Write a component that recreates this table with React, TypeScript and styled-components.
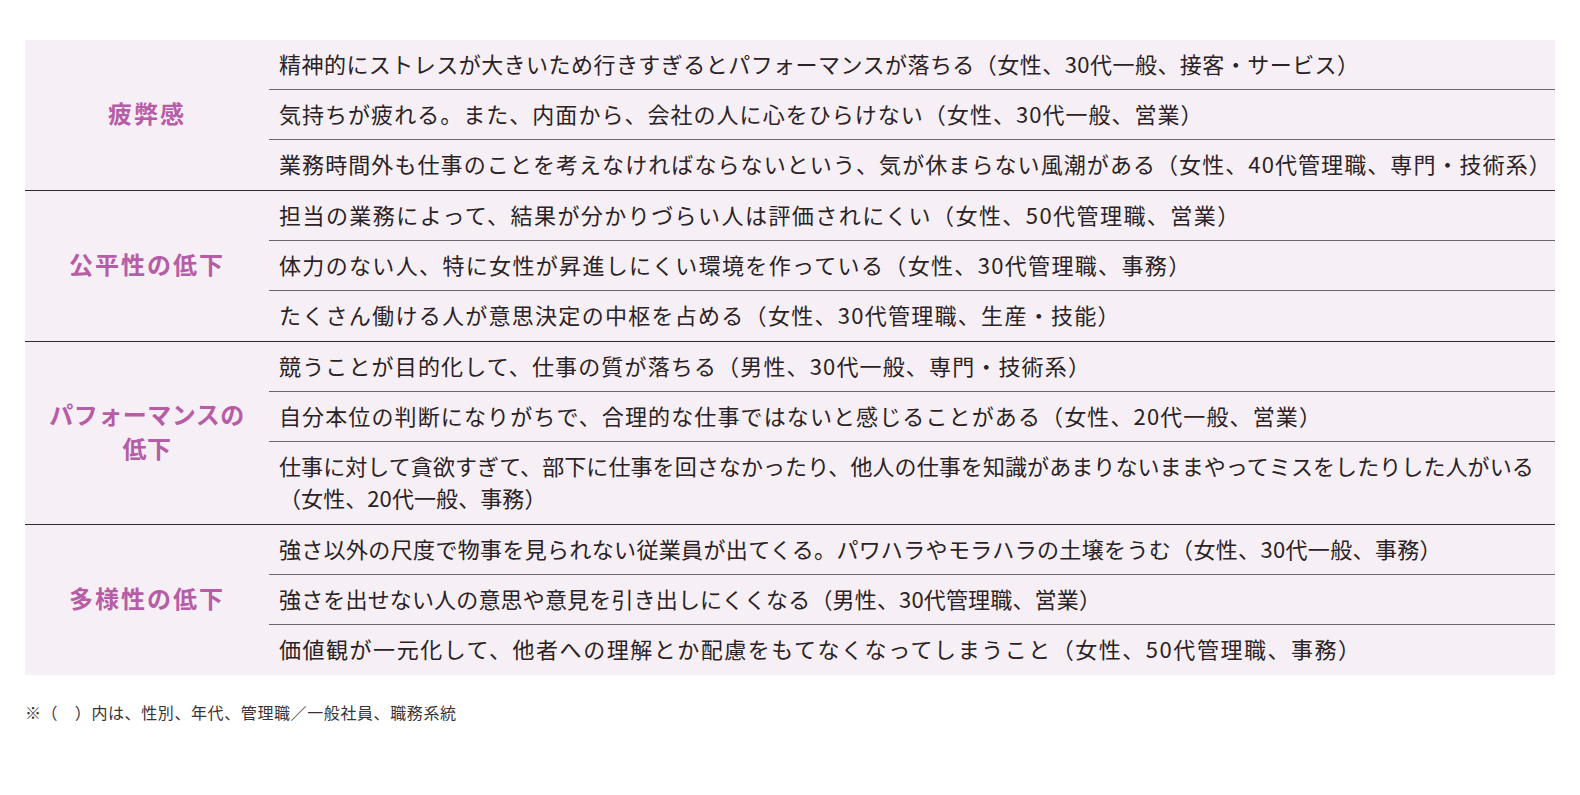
import styled, { createGlobalStyle } from 'styled-components'

type Comment = {
  text : string
  track : number
}

type Group = {
  label : string[]
  labelTrack : number
  rows : Comment[]
}

// track = per-row tracking, the source is typeset with uneven spacing
const groups : Group[] = [
  {
    label: ['疲弊感'],
    labelTrack: 2,
    rows: [
      { text: '精神的にストレスが大きいため行きすぎるとパフォーマンスが落ちる（女性、30代一般、接客・サービス）', track: 0.46 },
      { text: '気持ちが疲れる。また、内面から、会社の人に心をひらけない（女性、30代一般、営業）', track: 1.03 },
      { text: '業務時間外も仕事のことを考えなければならないという、気が休まらない風潮がある（女性、40代管理職、専門・技術系）', track: 1.08 },
    ],
  },
  {
    label: ['公平性の低下'],
    labelTrack: 2,
    rows: [
      { text: '担当の業務によって、結果が分かりづらい人は評価されにくい（女性、50代管理職、営業）', track: 1.44 },
      { text: '体力のない人、特に女性が昇進しにくい環境を作っている（女性、30代管理職、事務）', track: 1.34 },
      { text: 'たくさん働ける人が意思決定の中枢を占める（女性、30代管理職、生産・技能）', track: 1.28 },
    ],
  },
  {
    label: ['パフォーマンスの', '低下'],
    labelTrack: 0.5,
    rows: [
      { text: '競うことが目的化して、仕事の質が落ちる（男性、30代一般、専門・技術系）', track: 1.15 },
      { text: '自分本位の判断になりがちで、合理的な仕事ではないと感じることがある（女性、20代一般、営業）', track: 1.12 },
      { text: '仕事に対して貪欲すぎて、部下に仕事を回さなかったり、他人の仕事を知識があまりないままやってミスをしたりした人がいる（女性、20代一般、事務）', track: 0.08 },
    ],
  },
  {
    label: ['多様性の低下'],
    labelTrack: 2,
    rows: [
      { text: '強さ以外の尺度で物事を見られない従業員が出てくる。パワハラやモラハラの土壌をうむ（女性、30代一般、事務）', track: 0.34 },
      { text: '強さを出せない人の意思や意見を引き出しにくくなる（男性、30代管理職、営業）', track: 0.16 },
      { text: '価値観が一元化して、他者への理解とか配慮をもてなくなってしまうこと（女性、50代管理職、事務）', track: 1.53 },
    ],
  },
]

function App () {
  return (
    <Page>
      <GlobalStyle />
      <Table>
        {groups.map((group, i) => (
          <GroupBlock key={i}>
            <Label $track={group.labelTrack}>
              {group.label.map((line, j) => (
                <span key={j}>{line}</span>
              ))}
            </Label>
            <Rows>
              {group.rows.map((row, j) => (
                <Row key={j} $track={row.track}>{row.text}</Row>
              ))}
            </Rows>
          </GroupBlock>
        ))}
      </Table>
      <Note>※（　）内は、性別、年代、管理職／一般社員、職務系統</Note>
    </Page>
  )
}

const GlobalStyle = createGlobalStyle`
  body {
    margin:0;
    background:#fff;
    font-family:"Noto Sans CJK JP", "Noto Sans", sans-serif;
    color:#2a2224;
  }
`

const Page = styled.div`
  padding:40px 25px 0 25px;
`

const Table = styled.div`
  width:1530px;
  background:#f6eff6;
  display:flex;
  flex-direction:column;
`

const GroupBlock = styled.div`
  display:grid;
  grid-template-columns:244px 1fr;
  padding-bottom:1px;
  border-bottom:1px solid #322a2c;

  &:last-child {
    border-bottom:none;
  }
`

const Label = styled.div<{ $track : number }>`
  display:flex;
  flex-direction:column;
  align-items:center;
  justify-content:center;
  font-size:24px;
  font-weight:700;
  line-height:34px;
  letter-spacing:${(props) => props.$track}px;
  color:#b75ca6;
  padding-bottom:3px;
`

const Rows = styled.div`
  display:flex;
  flex-direction:column;
`

const Row = styled.div<{ $track : number }>`
  padding:7px 10px 10px 10px;
  font-size:22px;
  line-height:32px;
  letter-spacing:${(props) => props.$track}px;
  border-top:1px solid #6e6668;

  &:first-child {
    border-top:none;
  }
`

const Note = styled.div`
  margin-top:27px;
  font-size:16px;
  line-height:20px;
  letter-spacing:0.6px;
  color:#3a3335;
`

export default App
